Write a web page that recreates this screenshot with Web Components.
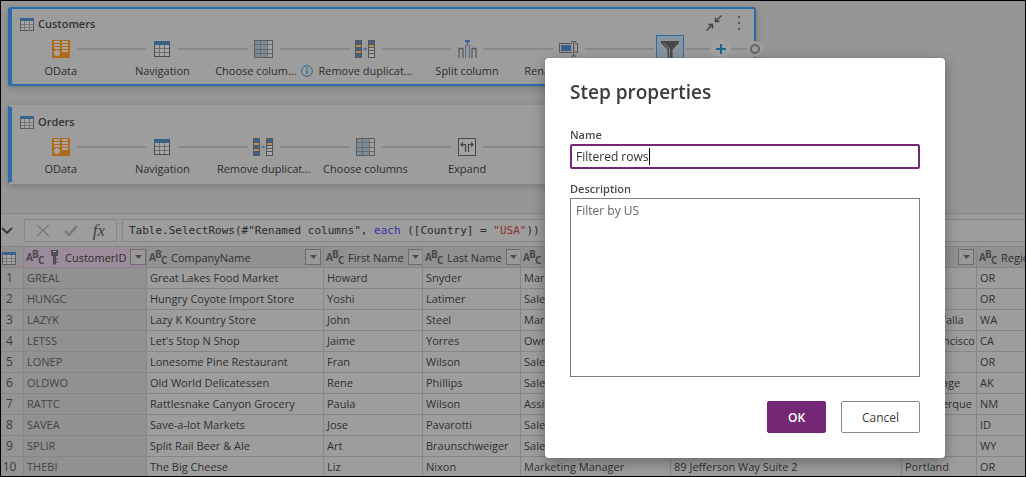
<!DOCTYPE html>
<html lang="en">
<head>
<meta charset="utf-8">
<title>Query editor</title>
<style>
  html { background: #000; }
  body {
    margin: 0; box-sizing: border-box; height: 100vh; border: 1px solid #000;
    overflow: hidden; background: #969696; color: #2d2d2d;
    font-family: "Open Sans", "Noto Sans", sans-serif; font-size: 11px;
    --blue: #2a6cab; --rule: #868686; --card: #9d9d9d;
  }
</style>
</head>
<body>
<query-editor></query-editor>
<script>
const ICONS = {
  table: [14, 13, `<rect x=".5" y=".5" width="13" height="12" fill="#a6a6a6" stroke="#595c60"/><path d="M0 0h14v3H0z" fill="#3a648f"/><path d="M4.5 3v9M9.5 3v9M1 6.5h12M1 9.5h12" stroke="#74777a" fill="none"/>`],
  nav: [16, 16, `<rect x=".5" y=".5" width="15" height="15" fill="#a6a6a6" stroke="#4c4c4c"/><path d="M0 0h16v4H0z" fill="#3c5f85"/><path d="M5.5 4v11M10.5 4v11M1 7.5h14M1 11.5h14" stroke="#6c6c6c" fill="none"/>`],
  odata: [18, 18, `<path d="M0 0h18v18H0z" fill="#ad6c1c"/><path d="M2 1h6v2H2zM2 4h6v2H2zM2 7h6v2H2zM10 1h6v2h-6zM10 4h6v2h-6zM10 7h6v2h-6zM10 10h6v2h-6z" fill="#aaa59e"/><circle cx="5" cy="13" r="3" fill="#aaa59e"/>`],
  choose: [19, 18, `<rect x=".5" y=".5" width="18" height="17" fill="#a2a2a2" stroke="#5c5c5c"/><path d="M1 1h12v16H1z" fill="#7f8b99"/><path d="M6.5 1v16M13.5 1v16M1 4.5h17M1 9.5h17M1 13.5h17" stroke="#676c72" fill="none"/>`],
  dedupe: [21, 18, `<path d="M0 0h7v18H0zM13 0h7v18h-7z" fill="#555"/><path d="M1 1h5v3H1zM1 8h5v2H1zM1 14h5v3H1zM14 1h5v3h-5z" fill="#3e6289"/><path d="M1 5h5v2H1zM1 11h5v2H1zM14 5h5v2h-5z" fill="#b09262"/><path d="M14 8h5v2h-5zM14 11h5v2h-5zM14 14h5v3h-5z" fill="#aaa"/><path d="M8 9h3M10 7.500l1.500 1.500L10 10.500" stroke="#35618d" fill="none"/>`],
  split: [19, 18, `<path d="M1 18V8.500h4V18M18 18V8.500h-4V18" stroke="#5c5c5c" fill="none" stroke-width="1.300"/><path d="M7.500 18V5h4v13" stroke="#646d76" fill="#8f9aa6"/><path d="M7 0h5v1L9.500 4 7 1z" fill="#33608e"/>`],
  rename: [19, 16, `<path d="M13 2.500H.500v9H13M16 2.500h2.500v9H16" stroke="#555" fill="none"/><path d="M2 4h10v6H2z" fill="#38608a"/><path d="M12 .500h2l.700 1 .700-1h2M14.700 1v13M12 15.200h2l.700-1 .700 1h2" stroke="#4b4b4b" fill="none"/>`],
  expand: [18, 18, `<rect x=".500" y=".500" width="17" height="17" fill="#a2a2a2" stroke="#484848"/><path d="M7.500 14V6.500H3M5 4.500l-2 2 2 2M10.500 14V6.500H15M13 4.500l2 2-2 2" stroke="#444" stroke-width="1.200" fill="none"/>`],
  filter: [20, 20, `<path d="M1 1h18v2l-6.500 6.500V20h-5V9.500L1 3z" fill="#484848"/><path d="M4 3.500l5.500 5.500v9" stroke="#868e96" fill="none"/>`],
  info: [12, 12, `<circle cx="6" cy="6" r="5.400" stroke="#256a94" fill="none"/><path d="M6 5v4M6 2.600v1.400" stroke="#256a94" stroke-width="1.400"/>`],
  collapse: [16, 16, `<path d="M.500 15.500l6-6M2.500 9.500h4v4M15.500.500l-6 6M9.500 2.500v4h4" stroke="#3f3f3f" stroke-width="1.300" fill="none"/>`],
  dots: [4, 16, `<path d="M1 1h2v2H1zM1 7h2v2H1zM1 13h2v2H1z" fill="#555"/>`],
  plus: [10, 10, `<path d="M5 0v10M0 5h10" stroke="#1c678f" stroke-width="2"/>`],
  chevron: [12, 8, `<path d="M1 1l5 5 5-5" stroke="#3a3a3a" stroke-width="1.800" fill="none"/>`],
  cross: [14, 13, `<path d="M1 1l12 11M13 1L1 12" stroke="#7a7a7a" stroke-width="1.500" fill="none"/>`],
  check: [14, 12, `<path d="M1 6l4 4L13 1" stroke="#7a7a7a" stroke-width="2.500" fill="none"/>`],
  key: [9, 15, `<path d="M1 0h7v6H6v8l-1.500 1L3 14V6H1z" fill="#505050"/><path d="M3 1.500h3" stroke="#a0a0a0"/><path d="M6 9h1.500M6 12h1.500" stroke="#505050"/>`],
  caret: [7, 4, `<path d="M0 0h7L3.500 4z" fill="#4e4e4e"/>`]
};
function define(name, render) {
  customElements.define(name, class extends HTMLElement {
    connectedCallback() {
      if (this.shadowRoot) return;
      this.attachShadow({ mode: "open" }).innerHTML = render(this);
    }
  });
}

define("ui-icon", el => {
  const [w, h, body] = ICONS[el.getAttribute("name")];
  return `<style>:host{display:inline-block;flex:none;line-height:0}svg{display:block}</style>
  <svg width="${w}" height="${h}" viewBox="0 0 ${w} ${h}" aria-hidden="true">${body}</svg>`;
});

define("flow-step", el => `<style>
  :host { display: block; min-width: 0; }
  .track { display: flex; align-items: center; height: 20px; }
  .line { flex: 1; height: 2px; background: #898989; }
  :host([first]) .before { visibility: hidden; }
  .icon { width: 32px; display: flex; justify-content: center; }
  :host([selected]) ui-icon { border: 1px solid var(--blue); background: #8a949e; padding: 4px 3px 2px; margin: -4px 0; }
  .label { display: flex; justify-content: center; align-items: center; gap: 4px; margin: 3px -4px 0; line-height: 18px; font-size: 11px; white-space: nowrap; }
</style>
<div class="track"><span class="line before"></span><span class="icon"><ui-icon name="${el.getAttribute("icon")}"></ui-icon></span><span class="line"></span></div>
<div class="label"><slot></slot>${el.hasAttribute("info") ? '<ui-icon name="info"></ui-icon>' : ""}</div>`);

define("query-card", el => `<style>
  :host { display: block; box-sizing: border-box; border: 2px solid var(--card); border-left-color: var(--blue); border-radius: 3px;
    background: var(--card); padding-bottom: 4px; box-shadow: inset 2px 0 var(--blue), 0 2px 6px rgba(0,0,0,.2); }
  :host([active]) { border-color: var(--blue); }
  header { display: flex; align-items: center; height: 30px; padding: 0 13px 0 10px; }
  h2 { flex: 1; margin: 0 0 0 4px; font-size: 11px; line-height: 16px; font-weight: 600; color: #333; }
  button { border: 0; padding: 0; background: none; margin-left: 15px; }
  .flow { display: flex; align-items: flex-start; }
  .steps { flex: 1; display: grid; grid-template-columns: repeat(7, minmax(0, 1fr)); }
  .tail { display: flex; align-items: center; height: 20px; width: 51px; margin: 0 -7px 0 -11px; position: relative; }
  .add { width: 21px; height: 20px; border-radius: 50%; margin: 0; background: #a3a3a3; display: grid; place-items: center; }
  .line { flex: 1; height: 2px; background: #898989; }
  .ring { box-sizing: border-box; width: 10px; height: 10px; border: 2px solid #666; border-radius: 50%; background: var(--card); box-shadow: 0 0 0 3px var(--card); margin: 0 1px 0 3px; }
</style>
<header><ui-icon name="table"></ui-icon><h2>${el.getAttribute("heading")}</h2>
${el.hasAttribute("active") ? '<button aria-label="Collapse"><ui-icon name="collapse"></ui-icon></button><button aria-label="More options"><ui-icon name="dots"></ui-icon></button>' : ""}</header>
<div class="flow"><div class="steps"><slot></slot></div>
${el.hasAttribute("active") ? '<div class="tail"><button class="add" aria-label="Add step"><ui-icon name="plus"></ui-icon></button><span class="line"></span><span class="ring"></span></div>' : '<div class="tail"></div>'}</div>`);

define("formula-bar", () => `<style>
  :host { display: flex; align-items: stretch; gap: 5px; padding: 5px 0 4px; border-top: 1px solid var(--rule); background: #9a9a9a; }
  button { border: 0; background: none; padding: 0; display: grid; place-items: center; color: #3e3e3e; }
  .toggle { width: 12px; margin-right: 6px; }
  .tools { display: grid; grid-template-columns: 36px 20px 36px; box-sizing: border-box; width: 93px; height: 23px; border: 1px solid var(--rule); background: var(--card); }
  .fx { font: italic 17px/20px "Liberation Serif", serif; }
  code { flex: 1; border: 1px solid var(--rule); border-right: 0; background: var(--card); padding-left: 6px; white-space: pre; font: 11px/21px "DejaVu Sans Mono", monospace; color: #2b2b2b; }
  .kw { color: #3434a4; } .str { color: #8e2f2f; }
</style>
<button class="toggle" aria-label="Expand formula bar"><ui-icon name="chevron"></ui-icon></button>
<div class="tools"><button aria-label="Discard"><ui-icon name="cross"></ui-icon></button><button aria-label="Commit"><ui-icon name="check"></ui-icon></button><button class="fx">fx</button></div>
<code>Table.SelectRows(#"Renamed columns", <span class="kw">each</span> ([Country] = <span class="str">"USA"</span>))</code>`);

define("column-head", el => `<style>
  :host { display: flex; align-items: center; height: 20px; padding: 0 2px; gap: 4px; font-size: 11px; font-weight: 400; color: #2f2f2f; }
  .type { display: flex; font-size: 10px; line-height: 10px; font-weight: 700; color: #484848; align-items: center; }
  .type span { width: 6px; }
  .type .b { align-self: flex-start; margin-top: -3px; } .type .c { align-self: flex-end; margin-bottom: -3px; }
  ui-icon[name=key] { margin: 0 2px; }
  .name { flex: 1; white-space: nowrap; }
  button { box-sizing: border-box; width: 16px; height: 16px; padding: 0; border: 1px solid #6d6d6d; background: #999; display: grid; place-items: center; flex: none; }
</style>
<span class="type"><span>A</span><span class="b">B</span><span class="c">C</span></span>
${el.hasAttribute("keyed") ? '<ui-icon name="key"></ui-icon>' : ""}<span class="name"><slot></slot></span>
<button aria-label="Column menu"><ui-icon name="caret"></ui-icon></button>`);

const ROWS = [
  ["GREAL", "Great Lakes Food Market", "Howard", "Snyder", "Marketing Manager", "", "", "OR"],
  ["HUNGC", "Hungry Coyote Import Store", "Yoshi", "Latimer", "Sales Representative", "", "", "OR"],
  ["LAZYK", "Lazy K Kountry Store", "John", "Steel", "Marketing Manager", "", "Walla Walla", "WA"],
  ["LETSS", "Let's Stop N Shop", "Jaime", "Yorres", "Owner", "", "San Francisco", "CA"],
  ["LONEP", "Lonesome Pine Restaurant", "Fran", "Wilson", "Sales Manager", "", "", "OR"],
  ["OLDWO", "Old World Delicatessen", "Rene", "Phillips", "Sales Representative", "", "Anchorage", "AK"],
  ["RATTC", "Rattlesnake Canyon Grocery", "Paula", "Wilson", "Assistant", "", "Albuquerque", "NM"],
  ["SAVEA", "Save-a-lot Markets", "Jose", "Pavarotti", "Sales Representative", "", "", "ID"],
  ["SPLIR", "Split Rail Beer & Ale", "Art", "Braunschweiger", "Sales Manager", "", "", "WY"],
  ["THEBI", "The Big Cheese", "Liz", "Nixon", "Marketing Manager", "89 Jefferson Way Suite 2", "Portland", "OR"]
];
define("data-grid", () => `<style>
  :host { display: block; overflow: hidden; border-top: 1px solid var(--rule); }
  table { border-collapse: separate; border-spacing: 0; table-layout: fixed; width: 1096px; }
  th, td { box-sizing: border-box; height: 21px; padding: 0; border: solid var(--rule); border-width: 0 1px 1px 0; font-weight: 400; text-align: left; white-space: nowrap; overflow: hidden; }
  thead th { background: #919191; }
  thead .key { background: #9c8b9b; }
  thead ui-icon { margin-left: 1px; vertical-align: middle; }
  td { padding-left: 3px; line-height: 20px; background: var(--card); color: #303030; }
  td:nth-child(2) { background: #919191; color: #444; }
  tbody th { background: #949494; line-height: 20px; font-size: 12px; text-align: center; padding-right: 5px; color: #3c3c3c; }
</style>
<table><colgroup>${[23, 123, 177, 99, 98, 150, 231, 75, 120].map(w => `<col style="width:${w}px">`).join("")}</colgroup>
<thead><tr><th><ui-icon name="table"></ui-icon></th><th class="key"><column-head keyed>CustomerID</column-head></th>
${["CompanyName", "First Name", "Last Name", "Contact Title", "Address", "City", "Region"].map(n => `<th><column-head>${n}</column-head></th>`).join("")}</tr></thead>
<tbody>${ROWS.map((r, i) => `<tr><th scope="row">${i + 1}</th>${r.map(c => `<td>${c.replace("&", "&amp;")}</td>`).join("")}</tr>`).join("")}</tbody></table>`);

define("step-dialog", () => `<style>
  :host { position: fixed; inset: 0; display: flex; justify-content: flex-end; align-items: flex-start; padding: 58px 81px 0 0; }
  form { box-sizing: border-box; width: 400px; padding: 20px 25px 25px; background: #fff; border-radius: 4px; box-shadow: 0 4px 14px rgba(0,0,0,.35); color: #333; }
  h1 { margin: 0 0 23px; font-size: 19px; line-height: 28px; font-weight: 600; color: #3b3b3b; }
  label { display: block; font-size: 11px; line-height: 12px; font-weight: 600; color: #4a4a4a; }
  .field { display: flex; align-items: center; box-sizing: border-box; height: 25px; border: 2px solid #742774; border-radius: 2px; padding-left: 4px; cursor: text; margin-bottom: 14px; }
  input { field-sizing: content; border: 0; padding: 0; outline: 0; font: inherit; font-size: 12px; color: #333; background: none; }
  .caret { width: 1px; height: 17px; background: #000; }
  textarea { display: block; box-sizing: border-box; width: 100%; height: 179px; margin: 3px 0 24px; padding: 3px 5px; border: 1px solid #7d7b79; border-radius: 0; resize: none; outline: 0; font: inherit; font-size: 12px; line-height: 17px; color: #666; }
  .name { margin-bottom: 3px; }
  footer { display: flex; justify-content: flex-end; gap: 15px; }
  button { box-sizing: border-box; height: 32px; border: 1px solid #8a8886; border-radius: 2px; background: #fff; color: #3b3b3b; font: inherit; font-size: 12px; padding: 0; width: 79px; }
  .ok { width: 59px; border-color: #742774; background: #742774; color: #fff; font-weight: 600; }
</style>
<form role="dialog" aria-labelledby="t">
  <h1 id="t">Step properties</h1>
  <label class="name" for="n">Name</label>
  <div class="field"><input id="n" value="Filtered rows"><span class="caret"></span></div>
  <label for="d">Description</label>
  <textarea id="d">Filter by US</textarea>
  <footer><button type="button" class="ok">OK</button><button type="button">Cancel</button></footer>
</form>`);

define("query-editor", () => `<style>
  :host { display: block; }
  .canvas { display: grid; gap: 19px; grid-template-columns: minmax(0, 748px); padding: 6px 7px 29px; }
</style>
<div class="canvas">
  <query-card heading="Customers" active>
    <flow-step first icon="odata">OData</flow-step><flow-step icon="nav">Navigation</flow-step>
    <flow-step icon="choose" info>Choose colum...</flow-step><flow-step icon="dedupe">Remove duplicat...</flow-step>
    <flow-step icon="split">Split column</flow-step><flow-step icon="rename">Rename columns</flow-step>
    <flow-step icon="filter" selected>Filtered rows</flow-step>
  </query-card>
  <query-card heading="Orders">
    <flow-step first icon="odata">OData</flow-step><flow-step icon="nav">Navigation</flow-step>
    <flow-step icon="dedupe">Remove duplicat...</flow-step><flow-step icon="choose">Choose columns</flow-step>
    <flow-step icon="expand">Expand</flow-step><flow-step icon="table">Custom</flow-step>
  </query-card>
</div>
<formula-bar></formula-bar>
<data-grid></data-grid>
<step-dialog></step-dialog>`);
</script>
</body>
</html>
